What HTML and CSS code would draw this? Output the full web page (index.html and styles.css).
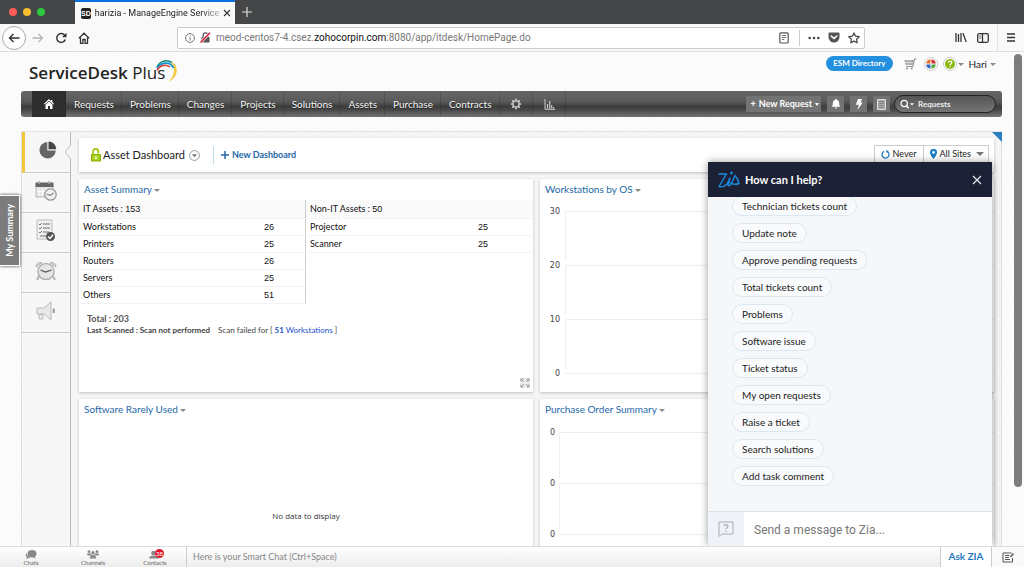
FILE: index.html
```html
<!DOCTYPE html>
<html lang="en">
<head>
<meta charset="utf-8">
<title>harizia - ManageEngine ServiceDesk Plus</title>
<link rel="stylesheet" href="styles.css">
</head>
<body>
<div class="tabstrip">
  <div class="lights"><i class="light red"></i><i class="light amber"></i><i class="light green"></i></div>
  <div class="tab">
    <span class="favicon">SD</span>
    <span class="tab-title">harizia - ManageEngine Service</span>
    <button class="icon-btn" aria-label="Close tab"><svg width="8" height="8" viewBox="0 0 8 8"><path d="M1 1l6 6M7 1L1 7" stroke="#333" stroke-width="1.1"/></svg></button>
  </div>
  <button class="icon-btn new-tab" aria-label="New tab"><svg width="10" height="10" viewBox="0 0 10 10"><path d="M5 0v10M0 5h10" stroke="#ddd" stroke-width="1.2"/></svg></button>
</div>

<div class="toolbar">
  <div class="nav-buttons">
    <button class="icon-btn back" aria-label="Back"><svg width="12" height="12" viewBox="0 0 12 12" fill="none" stroke="#333" stroke-width="1.4"><path d="M11.500 6H1.500M5.500 2L1.500 6l4 4"/></svg></button>
    <button class="icon-btn" aria-label="Forward"><svg width="12" height="12" viewBox="0 0 12 12" fill="none" stroke="#b5b5b5" stroke-width="1.300"><path d="M.5 6h10M6.500 2l4 4-4 4"/></svg></button>
    <button class="icon-btn" aria-label="Reload"><svg width="12" height="12" viewBox="0 0 12 12"><path d="M9.800 3.500A4.400 4.400 0 1 0 10.300 7.500" fill="none" stroke="#333" stroke-width="1.500"/><path d="M11.500 .7v4.500H7z" fill="#333"/></svg></button>
    <button class="icon-btn" aria-label="Home"><svg width="12" height="12" viewBox="0 0 12 12" fill="none" stroke="#333" stroke-width="1.300"><path d="M.7 6.400L6 1.200l5.300 5.200M2.500 5.500v5.800h2.400V7.500h2.200v3.800h2.400V5.500"/></svg></button>
  </div>
  <div class="urlbar">
    <svg width="10" height="10" viewBox="0 0 10 10" fill="none" stroke="#777"><circle cx="5" cy="5" r="4.400"/><path d="M5 4.300v3.200M5 2.300v1.100"/></svg>
    <svg width="11" height="11" viewBox="0 0 11 11"><path d="M1.500 5h8v5.500h-8z" fill="#555"/><path d="M3.200 5V3.200a2.300 2.300 0 0 1 4.600 0V5" fill="none" stroke="#555" stroke-width="1.300"/><path d="M.5 10.500L10 .8" stroke="#fff" stroke-width="2.800"/><path d="M.5 10.500L10 .8" stroke="#d7163c" stroke-width="1.500"/></svg>
    <span class="url">meod-centos7-4.csez.<b>zohocorpin.com</b>:8080/app/itdesk/HomePage.do</span>
    <button class="icon-btn" aria-label="Reader view"><svg width="10" height="12" viewBox="0 0 10 12" fill="none" stroke="#555"><rect x=".8" y=".8" width="8.400" height="10.200" rx="1" stroke-width="1.200"/><path d="M2.800 3.500h4.400M2.800 5.500h4.400M2.800 7.500h2.500" stroke-width=".8"/></svg></button>
    <i class="url-sep"></i>
    <button class="icon-btn" aria-label="Page actions"><svg width="12" height="4" viewBox="0 0 12 4" fill="#444"><circle cx="1.700" cy="2" r="1.300"/><circle cx="6" cy="2" r="1.300"/><circle cx="10.300" cy="2" r="1.300"/></svg></button>
    <button class="icon-btn" aria-label="Pocket"><svg width="12" height="11" viewBox="0 0 12 11"><path d="M1.500 .5h9q1 0 1 1V5a5.500 5.500 0 0 1-11 0V1.500q0-1 1-1z" fill="#555"/><path d="M3.200 4L6 6.600 8.800 4" fill="none" stroke="#fff" stroke-width="1.500" stroke-linecap="round"/></svg></button>
    <button class="icon-btn" aria-label="Bookmark"><svg width="12" height="12" viewBox="0 0 12 12"><path d="M6 .9l1.600 3.300 3.600.5-2.600 2.500.6 3.600L6 9.100l-3.200 1.700.6-3.600L.8 4.700l3.600-.5z" fill="none" stroke="#444" stroke-width="1.200" stroke-linejoin="round"/></svg></button>
  </div>
  <div class="tool-right">
    <button class="icon-btn" aria-label="Library"><svg width="12" height="11" viewBox="0 0 12 11" stroke="#333" stroke-width="1.300"><path d="M1 1v9M3.500 2v8M6 1v9M8 1.300l3.200 8.700"/></svg></button>
    <button class="icon-btn" aria-label="Sidebars"><svg width="12" height="10" viewBox="0 0 12 10" fill="none" stroke="#333" stroke-width="1.300"><rect x=".7" y=".7" width="10.600" height="8.600" rx="1.500"/><path d="M5.500 1v8"/><path d="M2.200 3h2M2.200 5h2" stroke-width=".8"/></svg></button>
    <i class="tool-sep"></i>
    <button class="icon-btn" aria-label="Menu"><svg width="10" height="9" viewBox="0 0 10 9" stroke="#333" stroke-width="1.300"><path d="M1 1h8M1 4.500h8M1 8h8"/></svg></button>
  </div>
</div>

<div class="page">
  <header class="header">
    <a class="logo" href="#"><b>ServiceDesk</b> Plus<svg class="swoosh" width="22" height="24" viewBox="0 0 22 24" fill="none"><path d="M15 2.500c8 4 8 15-2 20 5-6 6.500-12 3.500-17" fill="#f6c83c"/><path d="M1 8C4 2 10 0 16 3.500" stroke="#168a7c" stroke-width="1.500"/><path d="M1 9.500C5 3 14 2 17.500 9" stroke="#1795cf" stroke-width="1.800"/><path d="M1 11.500C4 6 10 5 14 8" stroke="#d9403a" stroke-width="1.500"/></svg></a>
    <div class="header-tools">
      <a class="esm" href="#">ESM Directory</a>
      <button class="icon-btn cart" aria-label="Cart"><svg width="13" height="12" viewBox="0 0 13 12"><path d="M12.500 1h-2L8.800 8.500H2" fill="none" stroke="#999" stroke-width="1.200"/><path d="M.5 2h9L8.500 7H1.700z" fill="#999"/><path d="M3 2v5M5 2v5M7 2v5M1 4.500h8" stroke="#fff" stroke-width=".5"/><circle cx="3" cy="10.500" r="1.100" fill="#999"/><circle cx="7.800" cy="10.500" r="1.100" fill="#999"/></svg></button>
      <button class="icon-btn apps" aria-label="Apps"><svg width="14" height="14" viewBox="0 0 14 14"><circle cx="7" cy="7" r="6.500" fill="#fff" stroke="#ccc"/><path d="M6.500 6.500H2.200A5 5 0 0 1 6.500 2.200z" fill="#e9732c"/><path d="M7.500 6.500V2.200a5 5 0 0 1 4.300 4.300z" fill="#cf3434"/><path d="M6.500 7.500v4.300a5 5 0 0 1-4.300-4.300z" fill="#2b67c1"/><path d="M7.500 7.500h4.300a5 5 0 0 1-4.300 4.300z" fill="#53a63b"/></svg></button>
      <button class="icon-btn help" aria-label="Help"><svg width="14" height="14" viewBox="0 0 14 14"><circle cx="7" cy="7" r="6.500" fill="#fff" stroke="#ccc"/><circle cx="7" cy="7" r="5" fill="#8bb80f"/><path d="M5.200 5.600c.2-2.200 3.800-2 3.600.1C8.700 7 7 7 7 8.300M7 9.300v1.200" fill="none" stroke="#fff" stroke-width="1.200"/></svg><i class="caret"></i></button>
      <button class="user">Hari <i class="caret"></i></button>
    </div>
  </header>

  <nav class="mainnav">
    <a class="home" href="#" aria-label="Home"><svg width="10" height="10" viewBox="0 0 10 10" fill="#fff"><path d="M5 0L0 4.700l.8.800L5 1.700l4.200 3.800.8-.8L8.300 3V1H7v.9z"/><path d="M1.500 5.700L5 2.600l3.500 3.100V10H6V7H4v3H1.500z"/></svg></a>
    <a href="#">Requests</a><a href="#">Problems</a><a href="#">Changes</a><a href="#">Projects</a><a href="#">Solutions</a><a href="#">Assets</a><a href="#">Purchase</a><a href="#">Contracts</a>
    <a class="glyph" href="#" aria-label="Settings"><svg width="12" height="12" viewBox="0 0 12 12" fill="none" stroke="#ccc"><circle cx="6" cy="6" r="3.100" stroke-width="1.400"/><path d="M6 .8v2M6 9.200v2M.8 6h2M9.200 6h2M2.300 2.300l1.400 1.400M8.300 8.300l1.400 1.400M2.300 9.700l1.400-1.400M8.300 3.700l1.400-1.400" stroke-width="1.700"/></svg></a>
    <a class="glyph" href="#" aria-label="Reports"><svg width="11" height="11" viewBox="0 0 11 11" fill="none" stroke="#ccc"><path d="M1 0v10.300h10"/><path d="M3.500 5v4.500M5.700 2v7.500M7.700 6v3.500M9.700 8v1.500" stroke-width="1.200"/></svg></a>
    <div class="nav-actions">
      <button class="nav-btn"><b>+</b> New Request <i class="caret light-caret"></i></button>
      <button class="nav-btn square" aria-label="Notifications"><svg width="10" height="10" viewBox="0 0 10 10" fill="#fff"><path d="M5 0a1 1 0 0 1 1 1c1.800.6 2.200 2 2.200 3.500 0 1.800.4 2.500 1.300 3.300H.5c.9-.8 1.300-1.500 1.300-3.300C1.800 3 2.200 1.600 4 1a1 1 0 0 1 1-1z"/><path d="M3.800 8.400h2.400a1.200 1.200 0 0 1-2.400 0z"/></svg></button>
      <button class="nav-btn square" aria-label="Quick actions"><svg width="8" height="11" viewBox="0 0 8 11" fill="#fff"><path d="M3 0h4L5.500 3.500h2.300L2.500 11l1.300-5.300H.8z"/></svg></button>
      <button class="nav-btn square" aria-label="Notes"><svg width="9" height="11" viewBox="0 0 9 11"><path d="M.5.5h8v10h-8z" fill="#aaa" stroke="#ddd"/><path d="M2 2.500h5M2 4.500h5M2 6.500h5M2 8.500h5" stroke="#777" stroke-width=".7"/></svg></button>
      <label class="search"><svg width="14" height="10" viewBox="0 0 14 10" fill="none" stroke="#fff"><circle cx="4.200" cy="4.500" r="3.200" stroke-width="1.200"/><path d="M6.500 7l2.200 2.200" stroke-width="1.500"/><path d="M10 4.200h4L12 6.500z" fill="#fff" stroke="none"/></svg><input type="text" aria-label="Search" placeholder="Requests"></label>
    </div>
  </nav>

  <div class="workspace">
    <aside class="side">
      <a class="side-item active" href="#" aria-label="Dashboard"><svg width="18" height="18" viewBox="0 0 18 18"><path d="M8.300 1v8.500h8.500A8.200 8.200 0 1 1 8.300 1z" fill="#666"/><path d="M9.500.5a8 8 0 0 1 7.800 7.800H9.500z" fill="#444"/></svg></a>
      <a class="side-item" href="#" aria-label="Scheduler"><svg width="22" height="20" viewBox="0 0 22 20"><path d="M1 3h17v13H1z" fill="#e4e4e4" stroke="#bbb"/><path d="M.5 1.500h18V6H.5z" fill="#666"/><path d="M4 0v3M14 0v3" stroke="#aaa" stroke-width="1.500"/><path d="M4 8v7M7.500 7v8M11 7v8M2 10.500h15" stroke="#fff"/><circle cx="15.500" cy="13.500" r="5.700" fill="#f0f0f0" stroke="#999" stroke-width="1.300"/><path d="M12 13.300l3.500 1 3-2.300" fill="none" stroke="#888" stroke-width="1.200"/></svg></a>
      <a class="side-item" href="#" aria-label="Tasks"><svg width="20" height="23" viewBox="0 0 20 23"><path d="M1 1h15v19H1z" fill="#f0f0f0" stroke="#bbb"/><path d="M7 5h7M7 9h7M7 13h6M4 17h6" stroke="#999" stroke-width="1.500"/><path d="M3 5l1 1 2-2M3 9l1 1 2-2M3 13l1 1 2-2" fill="none" stroke="#777"/><circle cx="14.500" cy="17.500" r="4.500" fill="#555"/><path d="M12 17.500l2 2 3-3.700" fill="none" stroke="#fff" stroke-width="1.400"/></svg></a>
      <a class="side-item" href="#" aria-label="Reminders"><svg width="22" height="20" viewBox="0 0 22 20" fill="#e6e6e6" stroke="#b0b0b0"><path d="M4 15l-2 4M18 15l2 4" stroke-width="1.800"/><circle cx="11" cy="10.500" r="8" stroke-width="1.500"/><path d="M1 6Q1 1 7 1.500zM21 6Q21 1 15 1.500z" fill="#ddd"/><path d="M5.500 9l5 2 6-2" fill="none" stroke="#555" stroke-width="1.300"/></svg></a>
      <a class="side-item" href="#" aria-label="Announcements"><svg width="20" height="20" viewBox="0 0 20 20" fill="#e8e8e8" stroke="#bbb"><path d="M1 7h7l7-6v18l-7-6H1z"/><path d="M3 13.500h4V18H3z"/><path d="M17.800 7.500v4.500" stroke="#999" stroke-width="2"/></svg></a>
    </aside>
    <svg class="notch" width="7" height="14" viewBox="0 0 7 14"><path d="M7 0v14L1 7z" fill="#f7f7f7"/><path d="M6.500 .5L1 7l5.500 6.500" fill="none" stroke="#bbb"/></svg>

    <main class="content">
      <section class="dash-head">
        <svg class="lock" width="10" height="14" viewBox="0 0 10 14"><path d="M2 7V3.500a2.600 2.600 0 0 1 5.300 0v2" fill="none" stroke="#9ac400" stroke-width="1.700"/><path d="M.5 6.500h9V13h-9z" fill="#a9d31c" stroke="#84ab00"/><path d="M5 8.500v2.500" stroke="#fff" stroke-width="1.500"/></svg>
        <h1>Asset Dashboard</h1>
        <button class="icon-btn" aria-label="Choose dashboard"><svg width="11" height="11" viewBox="0 0 11 11"><circle cx="5.500" cy="5.500" r="4.900" fill="#fff" stroke="#999"/><path d="M2.900 4.200h5.200L5.500 7.300z" fill="#777"/></svg></button>
        <a class="new-dash" href="#"><svg width="8" height="8" viewBox="0 0 8 8"><path d="M4 0v8M0 4h8" stroke="#2468a8" stroke-width="1.500"/></svg>New Dashboard</a>
        <div class="filters">
          <button><svg width="9" height="9" viewBox="0 0 9 9"><path d="M3.200 1.300A3.500 3.500 0 1 0 6 1.400" fill="none" stroke="#237fc4" stroke-width="1.300"/><path d="M5 0l2.800 1L5.700 3z" fill="#237fc4"/></svg>Never</button>
          <button><svg width="7" height="10" viewBox="0 0 7 10"><path d="M3.500 0A3.400 3.400 0 0 1 7 3.500C7 6 3.500 10 3.500 10S0 6 0 3.500A3.400 3.400 0 0 1 3.500 0z" fill="#187cc5"/><circle cx="3.500" cy="3.400" r="1.300" fill="#fff"/></svg>All Sites<i class="caret big-caret"></i></button>
        </div>
      </section>

      <div class="cards">
        <section class="card">
          <h2>Asset Summary <i class="caret"></i></h2>
          <div class="tables">
            <table>
              <thead><tr><th colspan="2">IT Assets : <span class="num">153</span></th></tr></thead>
              <tbody>
                <tr><td>Workstations</td><td class="num">26</td></tr>
                <tr><td>Printers</td><td class="num">25</td></tr>
                <tr><td>Routers</td><td class="num">26</td></tr>
                <tr><td>Servers</td><td class="num">25</td></tr>
                <tr><td>Others</td><td class="num">51</td></tr>
              </tbody>
            </table>
            <table>
              <thead><tr><th colspan="2">Non-IT Assets : <span class="num">50</span></th></tr></thead>
              <tbody>
                <tr><td>Projector</td><td class="num">25</td></tr>
                <tr><td>Scanner</td><td class="num">25</td></tr>
              </tbody>
            </table>
          </div>
          <div class="totals">
            <p class="total">Total : 203</p>
            <p class="scan"><b>Last Scanned : Scan not performed</b><span>Scan failed for [ <a href="#"><b>51</b> Workstations</a> ]</span></p>
          </div>
          <button class="icon-btn expand" aria-label="Expand"><svg width="10" height="10" viewBox="0 0 10 10" fill="none" stroke="#999"><path d="M1 3.500V1h2.500M6.500 1H9v2.500M9 6.500V9H6.500M3.500 9H1V6.500M1 1l3 3M9 1L6 4M9 9L6 6M1 9l3-3"/></svg></button>
        </section>

        <section class="card">
          <h2>Workstations by OS <i class="caret"></i></h2>
          <ul class="axis">
            <li>30</li><li>20</li><li>10</li><li>0</li>
          </ul>
        </section>

        <section class="card">
          <h2>Software Rarely Used <i class="caret"></i></h2>
          <p class="empty">No data to display</p>
        </section>

        <section class="card">
          <h2>Purchase Order Summary <i class="caret"></i></h2>
          <ul class="axis short">
            <li>0</li><li>0</li><li>0</li>
          </ul>
        </section>
      </div>
    </main>
    <i class="corner"></i>
  </div>

  <button class="my-summary">My Summary</button>
  <i class="scrollbar"></i>

  <section class="zia">
    <header class="zia-head">
      <svg width="22" height="18" viewBox="0 0 22 18" fill="none" stroke="#1c8be0" stroke-width="1.400" stroke-linecap="round" stroke-linejoin="round"><path d="M1 3h7.500L1 15.500q4 1.500 8-2.500l3-6-2 6.500q0 2.500 3 0L17 4.500q3 3 4 8-5 2-9.500-1"/><circle cx="13.500" cy="2" r=".7"/></svg>
      <h2>How can I help?</h2>
      <button class="icon-btn" aria-label="Close"><svg width="10" height="10" viewBox="0 0 10 10"><path d="M1 1l8 8M9 1L1 9" stroke="#e6e8ee" stroke-width="1.200"/></svg></button>
    </header>
    <div class="chips">
      <button>Technician tickets count</button>
      <button>Update note</button>
      <button>Approve pending requests</button>
      <button>Total tickets count</button>
      <button>Problems</button>
      <button>Software issue</button>
      <button>Ticket status</button>
      <button>My open requests</button>
      <button>Raise a ticket</button>
      <button>Search solutions</button>
      <button>Add task comment</button>
    </div>
    <div class="zia-foot">
      <button class="hint" aria-label="Suggestions"><svg width="16" height="16" viewBox="0 0 16 16" fill="none" stroke="#a9adb6"><path d="M1 1h14v12H4l-3 2.300z"/><path d="M6 5.300c.2-2.300 4-2 3.800.1C9.700 6.800 8 6.700 8 8.300M8 9.700v1.200" stroke-width="1.200"/></svg></button>
      <input type="text" aria-label="Message" placeholder="Send a message to Zia...">
    </div>
  </section>
</div>

<footer class="chatbar">
  <button class="chat-item"><svg width="12" height="9" viewBox="0 0 12 9" fill="#888"><ellipse cx="7" cy="3.700" rx="4.500" ry="3.600"/><path d="M1.500 3Q-.5 6 2 7.200L1 9q2-.2 3-1.300l3 .3Q2 7 1.500 3zM9 6l2 2.500L7 7.300z"/></svg>Chats</button>
  <button class="chat-item"><svg width="12" height="9" viewBox="0 0 12 9" fill="#888"><circle cx="2" cy="1.700" r="1.400"/><circle cx="10" cy="1.700" r="1.400"/><circle cx="6" cy="2.700" r="1.700"/><path d="M0 3.500h4l1 2H.5zM12 3.500H8l-1 2h4.500zM2.800 8.500Q3 5 6 5t3.200 3.500z"/></svg>Channels</button>
  <button class="chat-item"><svg width="12" height="9" viewBox="0 0 12 9" fill="#888"><circle cx="4.500" cy="3" r="2.300"/><path d="M0 8.500Q.5 5.500 4.500 5.500T10 8.500z"/></svg>Contacts<span class="badge">38</span></button>
  <input class="smart" type="text" aria-label="Smart chat" placeholder="Here is your Smart Chat (Ctrl+Space)">
  <a class="ask" href="#">Ask ZIA</a>
  <button class="icon-btn compose" aria-label="Compose"><svg width="12" height="11" viewBox="0 0 12 11" fill="none" stroke="#555"><path d="M9.500 1H1v9h9.500V6"/><path d="M3 3.500h4.500M3 5.500h4M3 7.500h5"/><path d="M11.500 1.500L8.500 5" stroke-width="1.500"/></svg></button>
</footer>
</body>
</html>
```

FILE: styles.css
```css
* { box-sizing: border-box; }

body {
  margin: 0;
  height: 100vh;
  display: flex;
  flex-direction: column;
  overflow: hidden;
  font: 10px/12px Lato, "Liberation Sans", sans-serif;
  color: #222;
  background: #fafafa;
}

h1, h2, p, ul { margin: 0; padding: 0; font-weight: 400; }
a { color: inherit; text-decoration: none; }
svg { display: block; flex: none; }

button, input {
  font: inherit;
  color: inherit;
  background: none;
  border: 0;
  padding: 0;
  margin: 0;
}

input { outline: 0; min-width: 0; }

.icon-btn {
  display: inline-flex;
  align-items: center;
  justify-content: center;
  flex: none;
}

.caret {
  display: inline-block;
  flex: none;
  border: 3px solid transparent;
  border-top: 3px solid #888;
  border-bottom: 0;
  vertical-align: middle;
}
.light-caret { border-width: 3px 2px 0; border-top-color: #fff; }
.big-caret { border-width: 4px 4px 0; border-top-color: #777; }

/* Browser window */
.tabstrip {
  display: flex;
  align-items: stretch;
  height: 24px;
  flex: none;
  background: #454647;
}
.lights { display: flex; align-items: center; gap: 6px; width: 75px; padding-left: 9px; }
.light { width: 8px; height: 8px; border-radius: 50%; }
.red { background: #fc5b57; }
.amber { background: #f5bd2f; }
.green { background: #2bc840; }
.tab {
  display: flex;
  align-items: center;
  gap: 4px;
  width: 160px;
  padding: 0 8px 0 6px;
  background: #f9f9fa;
  border-top: 2px solid #0a6fe0;
}
.favicon {
  width: 12px;
  height: 11px;
  border-radius: 2px;
  background: #222;
  color: #fff;
  font: bold 7px/11px "Liberation Sans", sans-serif;
  text-align: center;
}
.tab-title {
  flex: 1;
  white-space: nowrap;
  font: 9px/12px Roboto, sans-serif;
  -webkit-mask-image: linear-gradient(90deg, #000 85%, rgba(0, 0, 0, .3));
  mask-image: linear-gradient(90deg, #000 85%, rgba(0, 0, 0, .3));
}
.new-tab { margin-left: 7px; }

.toolbar {
  display: flex;
  align-items: center;
  height: 28px;
  flex: none;
  background: #f9f9fa;
  border-bottom: 1px solid #ddd;
}
.nav-buttons { display: flex; align-items: center; gap: 11px; width: 177px; padding-left: 2px; }
.back { width: 24px; height: 24px; border: 1px solid #aaa; border-radius: 50%; background: #fff; margin-right: -5px; }
.urlbar {
  display: flex;
  align-items: center;
  gap: 5px;
  flex: 1;
  height: 22px;
  padding: 0 4px 0 7px;
  background: #fff;
  border: 1px solid #ccc;
  border-radius: 2px;
}
.url {
  flex: 1;
  white-space: nowrap;
  overflow: hidden;
  font: 10px/14px Roboto, sans-serif;
  color: #777;
}
.url b { font-weight: 400; color: #111; }
.url-sep { width: 1px; height: 16px; margin: 0 3px 0 5px; background: #ccc; }
.urlbar .icon-btn + .icon-btn { margin-left: 3px; }
.tool-right { display: flex; align-items: center; justify-content: flex-end; gap: 10px; width: 159px; padding-right: 8px; }
.tool-sep { width: 1px; height: 27px; margin: 0 -2px; background: #e2e2e2; }

/* Application page */
.page {
  position: relative;
  flex: 1;
  min-height: 0;
  overflow: hidden;
  padding: 0 22px 0 21px;
  background: repeating-linear-gradient(45deg, #fafafa 0 2px, #fcfcfc 2px 4px);
}
.header { display: flex; justify-content: space-between; height: 39px; padding-left: 8px; }
.logo { display: flex; align-items: flex-start; padding-top: 7px; font: 17px/28px "Open Sans", sans-serif; color: #222; white-space: pre; }
.logo b { font-weight: 600; }
.swoosh { margin-left: -9px; }
.header-tools { display: flex; align-items: center; height: 24px; padding-right: 6px; }
.esm {
  padding: 0 7px;
  margin: 0 11px 2px 0;
  border-radius: 8px;
  background: #2491e0;
  color: #fff;
  font-size: 8px;
  line-height: 15px;
  font-weight: 700;
}
.apps { margin-left: 7px; }
.help { margin: 0 5px; gap: 1px; }
.user { display: flex; align-items: center; gap: 3px; }

.mainnav {
  display: flex;
  align-items: stretch;
  height: 26px;
  padding: 0 6px 0 11px;
  border-radius: 3px;
  background: linear-gradient(#666, #5a5a5a 40%, #3d3d3d 60%, #4b4b4b 75%, #757575);
  color: #f4f4f4;
}
.mainnav > a {
  display: flex;
  align-items: center;
  padding: 0 7px 0 8px;
  border-right: 1px solid rgba(0, 0, 0, .12);
  text-shadow: 0 1px 1px #222;
}
.mainnav > .home { width: 34px; justify-content: center; background: #2e2e2e; padding: 0; }
.mainnav > .glyph { width: 33px; justify-content: center; }
.nav-actions { display: flex; align-items: center; gap: 6px; margin-left: auto; }
.nav-btn {
  display: flex;
  align-items: center;
  justify-content: center;
  gap: 3px;
  height: 16px;
  padding: 0 2px 0 4px;
  background: #737373;
  color: #fff;
  font-size: 9px;
  font-weight: 700;
}
.square { width: 17px; padding: 0; }
.search {
  display: flex;
  align-items: center;
  gap: 4px;
  width: 102px;
  height: 18px;
  margin-left: -2px;
  padding: 0 6px 0 5px;
  border: 1px solid #222;
  border-radius: 9px;
  background: linear-gradient(#555, #747474);
}
.search input { flex: 1; font-size: 8px; font-weight: 700; }
.search input::placeholder { color: #eee; opacity: 1; }

.workspace {
  position: relative;
  display: grid;
  grid-template-columns: 50px minmax(0, 1fr);
  margin-top: 14px;
  border-top: 1px solid #e2e2e2;
  border-right: 1px solid #e2e2e2;
  background: #f5f5f5;
}
.side { border-left: 1px solid #ddd; border-right: 1px solid #bbb; background: #f7f7f7; }
.side-item {
  display: flex;
  align-items: center;
  justify-content: center;
  height: 40px;
  padding-bottom: 4px;
  border-bottom: 1px solid #ccc;
}
.side-item.active { height: 41px; border-left: 3px solid #f6c63a; }
.notch { position: absolute; left: 43px; top: 13px; }
.corner {
  position: absolute;
  right: -1px;
  top: 0;
  border: 5px solid #2a7fc0;
  border-left-color: transparent;
  border-bottom-color: transparent;
}

.content { padding: 6px 7px 0 8px; }
.dash-head, .card { background: #fff; box-shadow: 0 1px 3px rgba(0, 0, 0, .22); }
.dash-head { display: flex; align-items: center; height: 34px; padding: 0 5px 0 12px; }
.dash-head h1 { margin: 0 4px 0 2px; font-size: 11px; line-height: 16px; }
.new-dash {
  display: flex;
  align-items: center;
  gap: 3px;
  margin-left: 13px;
  padding-left: 7px;
  border-left: 1px solid #bcdcf0;
  color: #2468a8;
  font-size: 9px;
  font-weight: 700;
  line-height: 18px;
}
.filters { display: flex; align-self: flex-end; height: 27px; margin-left: auto; }
.filters button {
  display: flex;
  align-items: center;
  gap: 3px;
  height: 18px;
  padding: 0 6px;
  border: 1px solid #ccc;
  font-size: 9px;
}
.filters button + button { border-left: 0; padding-right: 4px; }
.filters .big-caret { margin-left: 2px; }

.cards { display: grid; grid-template-columns: 1fr 1fr; grid-auto-rows: 213px; gap: 7px; margin-top: 7px; }
.card { position: relative; }
.card h2 { padding: 3px 5px 4px; line-height: 14px; font-size: 10px; color: #2468a8; }

.tables { display: grid; grid-template-columns: 1fr 1fr; align-items: start; }
.tables table { width: 100%; border-collapse: collapse; }
.tables table:first-child { border-right: 1px solid #ccc; }
.tables th, .tables td {
  height: 17px;
  padding: 0 4px;
  font-size: 9px;
  line-height: 16px;
  font-weight: 400;
  text-align: left;
  color: #111;
  border-bottom: 1px solid #f3f3f3;
}
.tables th { height: 18px; background: #fafafa; }
.num { font-family: "Liberation Sans", sans-serif; }
.tables td.num { width: 52%; padding-right: 31px; text-align: right; }
.tables table + table td.num { padding-right: 45px; }

.totals { padding: 9px 8px 0; color: #555; }
.total { font-size: 9px; font-weight: 700; }
.scan { display: flex; gap: 8px; font-size: 8px; line-height: 11px; color: #444; }
.scan a { color: #2450c8; }
.expand { position: absolute; right: 3px; bottom: 4px; background: #eee; }

.axis { list-style: none; padding: 6px 0 0 5px; color: #444; font: 8px/12px "DejaVu Sans", sans-serif; }
.axis li { display: grid; grid-template-columns: 15px 1fr; gap: 5px; height: 54px; text-align: right; }
.axis li::after { content: ""; margin-top: 5px; border: 1px solid #eee; border-width: 1px 0 0 1px; }
.axis li:last-child::after { border-left: 0; }
.axis.short li { grid-template-columns: 10px 1fr; gap: 4px; height: 51px; }
.axis.short { padding-top: 7px; }
.empty { padding-top: 90px; text-align: center; font: 8px/12px "Open Sans", sans-serif; color: #333; }

.my-summary {
  position: absolute;
  left: 0;
  top: 143px;
  width: 20px;
  height: 71px;
  border: 1px solid #fff;
  border-left: 0;
  background: #7c7c7c;
  box-shadow: 0 0 3px #333;
  color: #fff;
  font-size: 9px;
  font-weight: 700;
  writing-mode: sideways-lr;
}
.scrollbar {
  position: absolute;
  right: 2px;
  top: 2px;
  width: 8px;
  height: 433px;
  border-radius: 4px;
  background: #7d7d7d;
}

/* Assistant panel */
.zia {
  position: absolute;
  right: 32px;
  top: 110px;
  bottom: 0;
  width: 284px;
  display: flex;
  flex-direction: column;
  background: #f6f7f8;
  box-shadow: 0 0 8px rgba(0, 0, 0, .4);
}
.zia-head { display: flex; align-items: center; height: 35px; flex: none; padding: 0 10px; background: #1c2136; color: #fff; }
.zia-head h2 { flex: 1; margin-left: 5px; font-size: 11px; line-height: 16px; font-weight: 700; }
.chips {
  flex: 1;
  min-height: 0;
  display: flex;
  flex-direction: column;
  align-items: flex-start;
  justify-content: flex-end;
  gap: 7px;
  padding: 0 24px 25px;
  overflow: hidden;
}
.chips button {
  flex: none;
  height: 20px;
  padding: 0 9px;
  border: 1px solid #dce8f1;
  border-radius: 10px;
  background: #f9fafb;
  font-size: 10px;
  color: #222;
}
.zia-foot { display: flex; height: 35px; flex: none; border-top: 1px solid #dde0e5; background: #fff; }
.hint { display: flex; align-items: center; justify-content: center; width: 36px; background: #eff2f7; }
.zia-foot input { flex: 1; padding: 2px 10px 0; font: 12px/16px Roboto, sans-serif; }
.zia-foot input::placeholder { color: #777; opacity: 1; }

/* Chat bar */
.chatbar {
  display: flex;
  flex: none;
  height: 21px;
  border-top: 1px solid #ddd;
  background: linear-gradient(#fff, #ededed);
}
.chat-item {
  position: relative;
  display: flex;
  flex-direction: column;
  align-items: center;
  justify-content: flex-end;
  width: 62px;
  font-size: 6px;
  line-height: 8px;
  color: #666;
}
.badge {
  position: absolute;
  left: 31px;
  top: 2px;
  width: 9px;
  height: 9px;
  border-radius: 5px;
  background: #e0142c;
  color: #fff;
  line-height: 9px;
}
.smart { flex: 1; padding: 0 6px; border-left: 1px solid #ccc; font-size: 9px; }
.smart::placeholder { color: #888; opacity: 1; }
.ask { width: 52px; border-left: 1px solid #ccc; border-right: 1px solid #ccc; background: #fff; text-align: center; line-height: 19px; color: #1f78bf; font-size: 10px; font-weight: 700; }
.compose { width: 32px; background: #fafafa; }
```
